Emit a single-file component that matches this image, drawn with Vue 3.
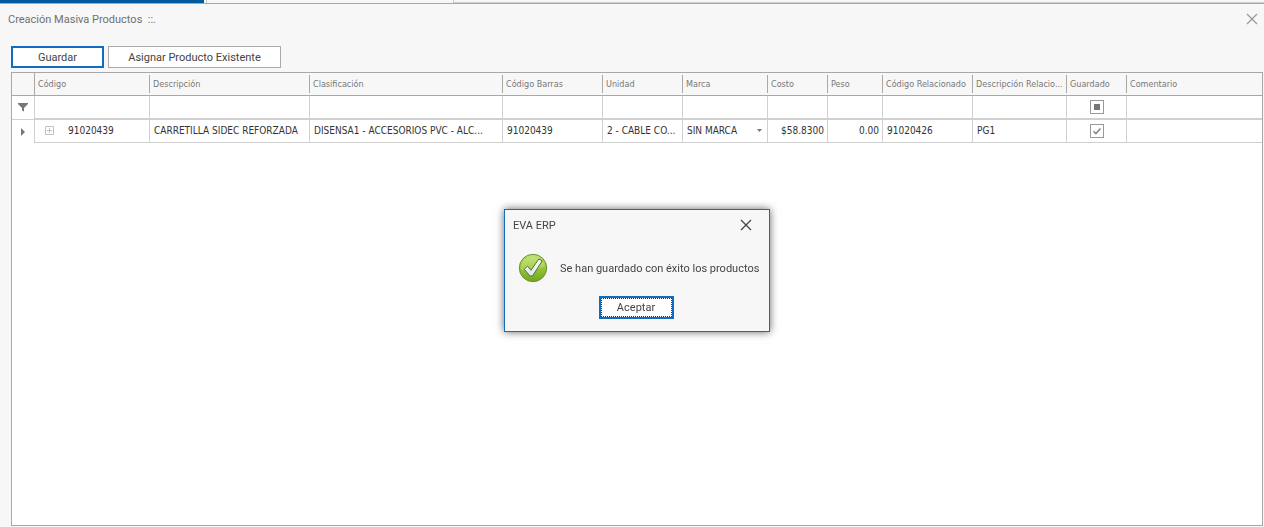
<script setup>
import { ref } from 'vue'

const columns = [
  { key: 'codigo', label: 'Código', width: 115 },
  { key: 'descripcion', label: 'Descripción', width: 160 },
  { key: 'clasificacion', label: 'Clasificación', width: 193 },
  { key: 'barras', label: 'Código Barras', width: 100 },
  { key: 'unidad', label: 'Unidad', width: 80 },
  { key: 'marca', label: 'Marca', width: 85 },
  { key: 'costo', label: 'Costo', width: 60, numeric: true },
  { key: 'peso', label: 'Peso', width: 55, numeric: true },
  { key: 'relacionado', label: 'Código Relacionado', width: 90 },
  { key: 'descRelacionado', label: 'Descripción Relacio...', width: 94 },
  { key: 'guardado', label: 'Guardado', width: 60 },
  { key: 'comentario', label: 'Comentario' },
]

const rows = ref([
  {
    codigo: '91020439',
    descripcion: 'CARRETILLA SIDEC REFORZADA',
    clasificacion: 'DISENSA1 - ACCESORIOS PVC - ALC...',
    barras: '91020439',
    unidad: '2 - CABLE CO...',
    marca: 'SIN MARCA',
    costo: '$58.8300',
    peso: '0.00',
    relacionado: '91020426',
    descRelacionado: 'PG1',
    guardado: true,
    comentario: '',
  },
])

const dialogOpen = ref(true)
</script>

<template>
  <div class="window">
    <div class="tabs">
      <div class="tab active"></div>
      <div class="tab plain"></div>
      <div class="tab rest"></div>
    </div>

    <header class="titlebar">
      <h1>Creación Masiva Productos &nbsp;::.</h1>
      <button class="close" type="button" aria-label="Cerrar">
        <svg width="12" height="12" viewBox="0 0 12 12"><path d="M1 1L11 11M11 1L1 11" /></svg>
      </button>
    </header>

    <div class="toolbar">
      <button class="btn primary" type="button">Guardar</button>
      <button class="btn wide" type="button">Asignar Producto Existente</button>
    </div>

    <main class="grid">
      <table>
        <colgroup>
          <col class="indicator-col" />
          <col v-for="c in columns" :key="c.key" :style="c.width ? { width: c.width + 'px' } : null" />
        </colgroup>
        <thead>
          <tr>
            <th class="indicator"></th>
            <th v-for="c in columns" :key="c.key" scope="col"><span>{{ c.label }}</span></th>
          </tr>
        </thead>
        <tbody>
          <tr class="filter">
            <td class="indicator">
              <svg width="10" height="9" viewBox="0 0 10 9"><path d="M0 0H10V1L6 5V8.500L4 7.500V5L0 1Z" /></svg>
            </td>
            <td v-for="c in columns" :key="c.key" :class="{ center: c.key === 'guardado' }">
              <input v-if="c.key === 'guardado'" class="check mixed" type="checkbox" aria-label="Filtrar guardado" />
            </td>
          </tr>
          <tr v-for="row in rows" :key="row.codigo" class="data">
            <td class="indicator">
              <svg width="4" height="8" viewBox="0 0 4 8"><path d="M0 0L4 4L0 8Z" /></svg>
            </td>
            <td
              v-for="c in columns"
              :key="c.key"
              :class="{ num: c.numeric, center: c.key === 'guardado' }"
            >
              <div v-if="c.key === 'codigo'" class="code">
                <button class="expand" type="button" aria-label="Expandir">
                  <svg width="9" height="9" viewBox="0 0 9 9"><path d="M0.500 0.500H8.500V8.500H0.500ZM2 4.500H7M4.500 2V7" /></svg>
                </button>
                <span>{{ row.codigo }}</span>
              </div>
              <div v-else-if="c.key === 'marca'" class="combo">
                <select v-model="row.marca" aria-label="Marca">
                  <option>SIN MARCA</option>
                </select>
                <svg width="5" height="3" viewBox="0 0 5 3"><path d="M0 0H5L2.500 3Z" /></svg>
              </div>
              <div v-else-if="c.key === 'guardado'" class="ticked">
                <input v-model="row.guardado" class="check" type="checkbox" aria-label="Guardado" />
                <svg v-if="row.guardado" width="14" height="14" viewBox="0 0 14 14">
                  <path d="M3.500 7.200L5.900 9.600L10.500 4.500" />
                </svg>
              </div>
              <template v-else>{{ row[c.key] }}</template>
            </td>
          </tr>
        </tbody>
      </table>
    </main>

    <div v-if="dialogOpen" class="overlay">
      <section class="dialog" role="dialog" aria-labelledby="dialog-title">
        <div class="dialog-head">
          <h2 id="dialog-title">EVA ERP</h2>
          <button class="close dark" type="button" aria-label="Cerrar mensaje" @click="dialogOpen = false">
            <svg width="12" height="12" viewBox="0 0 12 12"><path d="M1 1L11 11M11 1L1 11" /></svg>
          </button>
        </div>
        <div class="message">
          <svg width="30" height="30" viewBox="0 0 30 30" aria-hidden="true">
            <defs>
              <linearGradient id="ball" x1="0" y1="0" x2="0" y2="1">
                <stop offset="0" stop-color="#c3e07a" />
                <stop offset="0.4" stop-color="#9ecb3f" />
                <stop offset="1" stop-color="#71a51f" />
              </linearGradient>
              <linearGradient id="tick" x1="0" y1="0" x2="0" y2="1">
                <stop offset="0" stop-color="#ffffff" />
                <stop offset="1" stop-color="#dbe6ee" />
              </linearGradient>
            </defs>
            <circle cx="15" cy="15" r="13.700" fill="url(#ball)" stroke="#6b9330" />
            <path d="M3 13A12.300 12.300 0 0 1 27 13Q19 18 3 17Z" fill="#d8ef9c" opacity="0.3" />
            <path
              d="M6.200 16.200L9.500 13.200L13 17.300L20.800 6L24.200 7.800L14.500 23H12Z"
              fill="url(#tick)"
              stroke="#50752a"
              stroke-linejoin="round"
            />
          </svg>
          <p>Se han guardado con éxito los productos</p>
        </div>
        <button class="btn accept" type="button" @click="dialogOpen = false">Aceptar</button>
      </section>
    </div>
  </div>
</template>

<style>
html,
body,
#app {
  height: 100%;
}
body {
  margin: 0;
}
</style>

<style scoped>
* {
  box-sizing: border-box;
}
.window {
  min-height: 100%;
  display: flex;
  flex-direction: column;
  background: #f7f7f7;
  color: #444;
  font-family: Roboto, Tahoma, sans-serif;
  font-size: 11px;
}
.tabs {
  display: flex;
  height: 4px;
  border-bottom: 1px solid #a8a8a8;
}
.tab.active {
  width: 204px;
  background: #005a9e;
}
.tab.plain {
  width: 247px;
  margin-left: 2px;
  border-left: 1px solid #c6c6c6;
}
.tab.rest {
  flex: 1;
  border-left: 1px solid #c6c6c6;
  border-bottom: 1px solid #d0d0d0;
}
.titlebar {
  display: flex;
  justify-content: space-between;
  align-items: center;
  height: 30px;
  padding: 0 6px 0 8px;
}
h1,
h2,
p {
  margin: 0;
  font-size: 11px;
  font-weight: normal;
  white-space: nowrap;
}
h1 {
  color: #707070;
}
.close {
  display: flex;
  padding: 0;
  border: 0;
  background: none;
}
.close svg {
  fill: none;
  stroke: #999;
  stroke-width: 1.3;
}
.close.dark svg {
  stroke: #444;
}
.toolbar {
  display: flex;
  gap: 4px;
  padding: 12px 11px 4px;
}
.btn {
  height: 22px;
  padding: 0;
  border: 1px solid #ababab;
  background: #fff;
  color: #444;
  font-family: inherit;
  font-size: 11px;
  white-space: nowrap;
}
.btn.primary {
  width: 93px;
  border: 2px solid #106ebe;
}
.btn.wide {
  width: 173px;
}
.grid {
  flex: 1;
  margin: 0 1px 1px 11px;
  border: 1px solid #a8a8a8;
  background: #fff;
  font-family: "DejaVu Sans Condensed", Tahoma, sans-serif;
}
table {
  width: 100%;
  table-layout: fixed;
  border-collapse: separate;
  border-spacing: 0;
}
.indicator-col {
  width: 23px;
}
th {
  height: 23px;
  padding: 0;
  border-bottom: 1px solid #a8a8a8;
  background: #f7f7f7;
  color: #777;
  font-size: 9px;
  font-weight: normal;
  text-align: left;
}
th span {
  display: block;
  height: 18px;
  padding-left: 3px;
  border-right: 1px solid #a8a8a8;
  line-height: 18px;
  white-space: nowrap;
}
th.indicator {
  border-right: 1px solid #a8a8a8;
}
th:last-child span {
  border-right: 0;
}
td {
  height: 23px;
  padding: 0 3px 1px 4px;
  border-right: 1px solid #d0d0d0;
  border-bottom: 1px solid #d0d0d0;
  color: #333;
  font-size: 10px;
  white-space: nowrap;
}
td:last-child {
  border-right: 0;
}
.filter td {
  height: 24px;
  border-bottom-width: 2px;
}
.filter td.indicator {
  border-bottom-width: 1px;
}
td.indicator {
  padding: 0;
  text-align: center;
}
.data td.indicator {
  border-bottom: 0;
}
.indicator svg {
  display: block;
  margin: 0 auto;
  fill: #777;
}
td.num {
  text-align: right;
}
td.center {
  padding: 0;
}
.code {
  display: flex;
  align-items: center;
  gap: 14px;
  padding-left: 6px;
}
.expand {
  display: flex;
  padding: 0;
  border: 0;
  background: none;
}
.expand svg {
  fill: none;
  stroke: #c0c0c0;
}
.combo {
  display: flex;
  align-items: center;
  justify-content: space-between;
  padding-right: 2px;
}
.combo select {
  appearance: none;
  padding: 0;
  border: 0;
  background: none;
  color: inherit;
  font: inherit;
}
.combo svg {
  fill: #777;
}
.check {
  appearance: none;
  display: block;
  width: 14px;
  height: 14px;
  margin: 0 auto;
  border: 1px solid #999;
  background: #fff;
}
.ticked {
  display: grid;
  justify-content: center;
}
.ticked > * {
  grid-area: 1 / 1;
}
.ticked svg {
  fill: none;
  stroke: #888;
  stroke-width: 1.6;
  pointer-events: none;
}
.check.mixed::before {
  content: "";
  display: block;
  width: 6px;
  height: 6px;
  margin: 3px;
  background: #777;
}
.overlay {
  position: fixed;
  inset: 0;
  display: flex;
  align-items: center;
  justify-content: center;
  padding: 14px 0 0 10px;
}
.dialog {
  display: flex;
  flex-direction: column;
  width: 266px;
  padding: 0 10px 12px 8px;
  border: 1px solid #106ebe;
  background: #f7f7f7;
  box-shadow: 0 0 8px rgba(0, 0, 0, 0.6);
}
.dialog-head {
  display: flex;
  align-items: center;
  justify-content: space-between;
  height: 30px;
  padding-right: 7px;
}
.message {
  display: flex;
  align-items: center;
  gap: 12px;
  height: 56px;
  padding-left: 5px;
}
.message svg {
  flex: none;
}
.btn.accept {
  align-self: center;
  width: 75px;
  height: 23px;
  border: 2px solid #106ebe;
  outline: 1px dotted #333;
  outline-offset: -3px;
}
</style>
